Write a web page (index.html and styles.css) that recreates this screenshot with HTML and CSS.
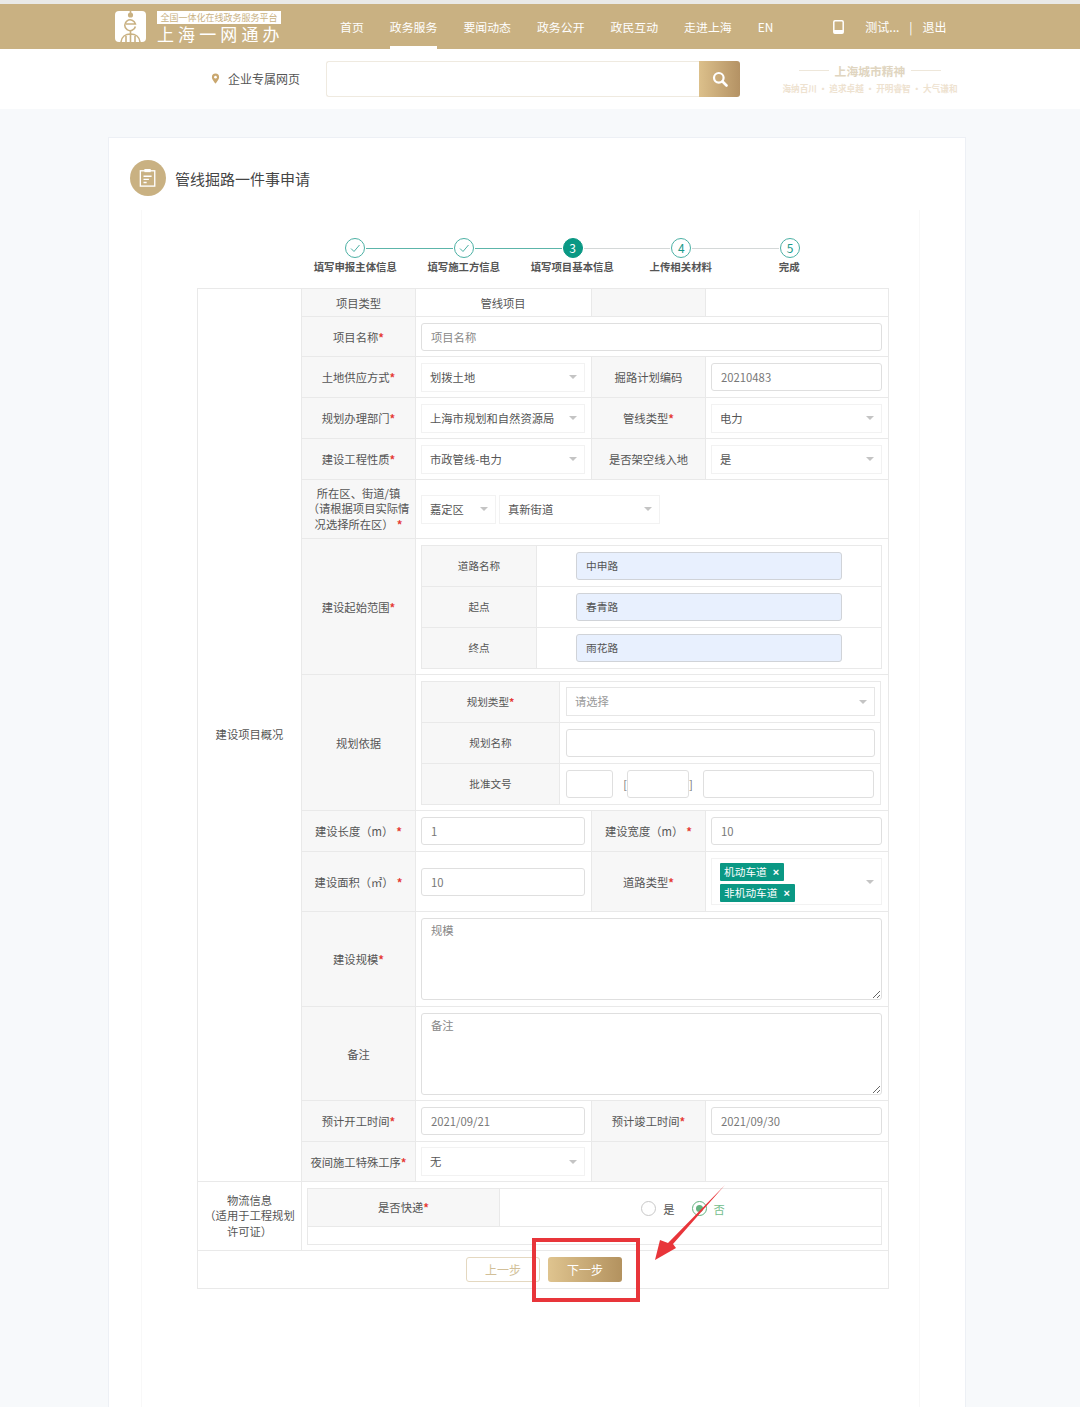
FILE: index.html
```html
<!DOCTYPE html>
<html lang="zh-CN">
<head>
<meta charset="utf-8">
<title>管线掘路一件事申请</title>
<link rel="stylesheet" href="styles.css">
</head>
<body>
<div class="page">
  <header class="topbar">
    <div class="brand">
      <svg class="logo-mark" viewBox="0 0 31 31"><rect width="31" height="31" rx="4" fill="#fff"/><g fill="none" stroke="#c9b182" stroke-width="1.6"><path d="M15.500 0v6"/><circle cx="15.500" cy="4" r="1.800" fill="#c9b182"/><path d="M20.400 15.500a5.400 5.400 0 1 1 0-2.500H11"/><path d="M15.500 19.500v4"/><path d="M15.500 23v8M6 31c.5-5 4.500-8 9.500-8s9 3 9.500 8M11 31v-6M20 31v-6"/></g></svg>
      <div class="brand-text">
        <span class="brand-sub">全国一体化在线政务服务平台</span>
        <span class="brand-main">上海一网通办</span>
      </div>
    </div>
    <nav class="nav">
      <a class="nav-item">首页</a>
      <a class="nav-item active">政务服务</a>
      <a class="nav-item">要闻动态</a>
      <a class="nav-item">政务公开</a>
      <a class="nav-item">政民互动</a>
      <a class="nav-item">走进上海</a>
      <a class="nav-item">EN</a>
    </nav>
    <div class="user">
      <svg class="phone" viewBox="0 0 11 14"><rect x=".8" y=".8" width="9.400" height="12.400" rx="1.200" fill="none" stroke="#fff" stroke-width="1.500"/><rect x=".8" y="10" width="9.400" height="3.200" fill="#fff"/></svg>
      <span class="user-name">测试...</span>
      <span class="user-sep">|</span>
      <span>退出</span>
    </div>
  </header>

  <div class="searchbar">
    <div class="location">
      <svg class="pin" viewBox="0 0 10 12"><path d="M5 .5a4 4 0 0 0-4 4c0 2.800 4 7 4 7s4-4.200 4-7a4 4 0 0 0-4-4z" fill="#c9a76f"/><circle cx="5" cy="4.500" r="1.500" fill="#fff"/></svg>
      <span>企业专属网页</span>
    </div>
    <div class="search">
      <div class="search-field"></div>
      <div class="search-btn">
        <svg viewBox="0 0 16 16" width="16" height="16"><circle cx="6.800" cy="6.800" r="4.800" fill="none" stroke="#fff" stroke-width="2.200"/><path d="M10.500 10.500l4 4" stroke="#fff" stroke-width="2.600" stroke-linecap="round"/></svg>
      </div>
    </div>
    <div class="slogan">
      <div class="slogan-title"><i></i><span>上海城市精神</span><i></i></div>
      <div class="slogan-sub">海纳百川 · 追求卓越 · 开明睿智 · 大气谦和</div>
    </div>
  </div>

  <main class="content">
    <section class="card">
      <div class="card-head">
        <span class="head-icon">
          <svg viewBox="0 0 20 22" width="18" height="20"><g fill="none" stroke="#fff" stroke-width="1.500"><rect x="1.500" y="3" width="16" height="17"/><path d="M5 9h9M5 12.500h6M5 16h3.500"/></g><rect x="6" y="1" width="7" height="3.500" fill="#fff"/></svg>
        </span>
        <h1 class="title">管线掘路一件事申请</h1>
      </div>
      <div class="card-inner">
        <div class="track">
          <span class="dot"><svg viewBox="0 0 12 12" width="12" height="12"><path d="M2 6.500l3 3 5.500-6.500" fill="none" stroke="#4bb0a4" stroke-width="1"/></svg></span>
          <span class="link done"></span>
          <span class="dot"><svg viewBox="0 0 12 12" width="12" height="12"><path d="M2 6.500l3 3 5.500-6.500" fill="none" stroke="#4bb0a4" stroke-width="1"/></svg></span>
          <span class="link done"></span>
          <span class="dot current">3</span>
          <span class="link"></span>
          <span class="dot">4</span>
          <span class="link"></span>
          <span class="dot">5</span>
        </div>
        <div class="step-labels">
          <span>填写申报主体信息</span>
          <span>填写施工方信息</span>
          <span>填写项目基本信息</span>
          <span>上传相关材料</span>
          <span>完成</span>
        </div>

        <table class="form">
          <colgroup><col class="c1"><col class="c2"><col class="c3"><col class="c4"><col class="c5"></colgroup>
          <tr class="h28">
            <td class="plain" rowspan="14">建设项目概况</td>
            <th>项目类型</th>
            <td class="center">管线项目</td>
            <th></th>
            <td></td>
          </tr>
          <tr class="h40">
            <th>项目名称<b>*</b></th>
            <td colspan="3"><input class="ipt" placeholder="项目名称"></td>
          </tr>
          <tr class="h41">
            <th>土地供应方式<b>*</b></th>
            <td><div class="sel">划拨土地</div></td>
            <th>掘路计划编码</th>
            <td><input class="ipt" value="20210483"></td>
          </tr>
          <tr class="h41">
            <th>规划办理部门<b>*</b></th>
            <td><div class="sel">上海市规划和自然资源局</div></td>
            <th>管线类型<b>*</b></th>
            <td><div class="sel">电力</div></td>
          </tr>
          <tr class="h41">
            <th>建设工程性质<b>*</b></th>
            <td><div class="sel">市政管线-电力</div></td>
            <th>是否架空线入地</th>
            <td><div class="sel">是</div></td>
          </tr>
          <tr class="h59">
            <th class="multi">所在区、街道/镇（请根据项目实际情况选择所在区）<b class="gap">*</b></th>
            <td colspan="3">
              <div class="sel-pair">
                <div class="sel district">嘉定区</div>
                <div class="sel street">真新街道</div>
              </div>
            </td>
          </tr>
          <tr class="h136">
            <th>建设起始范围<b>*</b></th>
            <td colspan="3">
              <table class="sub road">
                <tr><th>道路名称</th><td><input class="ipt filled" value="中申路"></td></tr>
                <tr><th>起点</th><td><input class="ipt filled" value="春青路"></td></tr>
                <tr><th>终点</th><td><input class="ipt filled" value="雨花路"></td></tr>
              </table>
            </td>
          </tr>
          <tr class="h136">
            <th>规划依据</th>
            <td colspan="3">
              <table class="sub plan">
                <tr><th>规划类型<b>*</b></th><td><div class="sel bordered muted">请选择</div></td></tr>
                <tr><th>规划名称</th><td><input class="ipt"></td></tr>
                <tr><th>批准文号</th><td>
                  <div class="doc-no">
                    <input class="ipt n1"><span class="br">[</span><input class="ipt n2"><span class="br">]</span><input class="ipt n3">
                  </div>
                </td></tr>
              </table>
            </td>
          </tr>
          <tr class="h41">
            <th>建设长度（m）<b class="gap">*</b></th>
            <td><input class="ipt" value="1"></td>
            <th>建设宽度（m）<b class="gap">*</b></th>
            <td><input class="ipt" value="10"></td>
          </tr>
          <tr class="h60">
            <th>建设面积（㎡）<b class="gap">*</b></th>
            <td><input class="ipt" value="10"></td>
            <th>道路类型<b>*</b></th>
            <td>
              <div class="sel tags">
                <span class="tag">机动车道<i>×</i></span>
                <span class="tag">非机动车道<i>×</i></span>
              </div>
            </td>
          </tr>
          <tr class="h95">
            <th>建设规模<b>*</b></th>
            <td colspan="3"><textarea class="area" placeholder="规模"></textarea></td>
          </tr>
          <tr class="h94">
            <th>备注</th>
            <td colspan="3"><textarea class="area" placeholder="备注"></textarea></td>
          </tr>
          <tr class="h41">
            <th>预计开工时间<b>*</b></th>
            <td><input class="ipt" value="2021/09/21"></td>
            <th>预计竣工时间<b>*</b></th>
            <td><input class="ipt" value="2021/09/30"></td>
          </tr>
          <tr class="h40">
            <th class="tight">夜间施工特殊工序<b>*</b></th>
            <td><div class="sel">无</div></td>
            <th></th>
            <td></td>
          </tr>
          <tr class="h69">
            <td class="plain wide">物流信息<br>（适用于工程规划<br>许可证）</td>
            <td colspan="4">
              <table class="sub logistics">
                <tr class="h38">
                  <th>是否快递<b>*</b></th>
                  <td>
                    <div class="radios">
                      <span class="radio"></span><span class="radio-text">是</span>
                      <span class="radio on"></span><span class="radio-text on">否</span>
                    </div>
                  </td>
                </tr>
                <tr class="h18"><td colspan="2"></td></tr>
              </table>
            </td>
          </tr>
          <tr class="h38">
            <td colspan="5">
              <div class="actions">
                <button class="btn ghost">上一步</button>
                <button class="btn solid">下一步</button>
              </div>
            </td>
          </tr>
        </table>
      </div>
    </section>
  </main>

  <div class="mark-box"></div>
  <svg class="mark-arrow" viewBox="0 0 80 80" width="80" height="80"><polygon points="74,0 22,59 25,63 4,75 9,55 17,58" fill="#e8353a"/></svg>
</div>
</body>
</html>
```

FILE: styles.css
```css
* { box-sizing: border-box; }
html, body { margin: 0; padding: 0; }
body {
  font-family: "Noto Sans CJK SC", "Liberation Sans", sans-serif;
  font-size: 11.3px;
  color: #555;
  background: #f7f9fb;
}
.page { position: relative; width: 1080px; height: 1407px; overflow: hidden; }

/* top bar */
.topbar {
  height: 49px;
  border-top: 4px solid #e9e9e7;
  background: #c9b182;
  display: flex;
  align-items: center;
  padding-left: 115px;
  color: #fff;
}
.brand { display: flex; align-items: center; gap: 11px; width: 225px; }
.logo-mark { width: 31px; height: 31px; }
.brand-text { display: flex; flex-direction: column; width: 124px; }
.brand-sub {
  background: #fff;
  color: #c9b182;
  font-size: 9px;
  line-height: 13px;
  height: 13px;
  text-align: center;
  white-space: nowrap;
  overflow: hidden;
}
.brand-main { font-size: 17px; line-height: 19px; letter-spacing: 4.1px; white-space: nowrap; }
.nav { display: flex; gap: 26px; height: 45px; font-size: 11.900px; }
.nav-item { line-height: 46px; height: 45px; }
.nav-item.active { border-bottom: 3px solid #fff; }
.user { display: flex; align-items: center; margin-left: 60px; font-size: 12px; }
.phone { width: 11px; height: 14px; margin-right: 21px; }
.user-sep { margin: 0 10px; }

/* search */
.searchbar {
  height: 60px;
  background: #fff;
  display: flex;
  align-items: center;
  padding-left: 211px;
}
.location { display: flex; align-items: center; gap: 8px; width: 115px; font-size: 12px; line-height: 16px; color: #555; margin-top: -1px; }
.pin { width: 9px; height: 11px; }
.search { display: flex; width: 414px; height: 36px; }
.search-field { flex: 1; border: 1px solid #efeae0; border-right: 0; border-radius: 3px 0 0 3px; }
.search-btn {
  width: 41px;
  background: linear-gradient(90deg, #dcc08b, #b49264);
  border-radius: 0 3px 3px 0;
  display: flex;
  align-items: center;
  justify-content: center;
}
.slogan { width: 176px; margin-left: 42px; text-align: center; }
.slogan-title {
  display: flex;
  align-items: center;
  justify-content: center;
  gap: 6px;
  font-size: 11.800px;
  font-weight: 700;
  line-height: 14px;
  color: #e0d5c0;
}
.slogan-title i { width: 30px; height: 1px; background: #eee7da; }
.slogan-sub { font-size: 8.600px; font-weight: 700; line-height: 13px; margin-top: 4px; color: #eee2d0; white-space: nowrap; }

/* card */
.content { padding: 28px 114px 0 108px; }
.card {
  height: 1300px;
  background: #fff;
  border: 1px solid #edf0f5;
}
.card-head { display: flex; align-items: center; gap: 9px; padding: 22px 0 0 21px; height: 58px; }
.head-icon {
  width: 36px;
  height: 36px;
  border-radius: 50%;
  background: #c9b182;
  display: flex;
  align-items: center;
  justify-content: center;
  flex: none;
}
.title { margin: 0; font-size: 15px; font-weight: 400; color: #444; }
.card-inner {
  margin: 14px 45px 0 32px;
  padding: 28px 0 0 55px;
  height: 1220px;
  border-left: 1px solid #f8f8f8;
  border-right: 1px solid #f8f8f8;
}

/* steps */
.track { display: flex; align-items: center; width: 455px; margin-left: 148px; height: 20px; }
.dot {
  width: 20px;
  height: 20px;
  flex: none;
  border-radius: 50%;
  border: 1px solid #4bb0a4;
  color: #1a9a8a;
  font-size: 12px;
  line-height: 18px;
  text-align: center;
  background: #fff;
  display: flex;
  align-items: center;
  justify-content: center;
}
.dot.current { background: #0a9884; border-color: #0a9884; color: #fff; }
.link { flex: 1; height: 1px; background: #d4d8d8; margin: 0 1px; }
.link.done { background: #5cb5aa; }
.step-labels {
  display: grid;
  grid-template-columns: repeat(5, 108.500px);
  margin: 1px 0 14px 104px;
  font-size: 10.400px;
  font-weight: 700;
  line-height: 15px;
  text-align: center;
  color: #555;
  white-space: nowrap;
}

/* form table */
.form, .sub { border-collapse: collapse; table-layout: fixed; }
.form { width: 691px; margin-left: 0; }
.c1 { width: 104px; }
.c2 { width: 114px; }
.c3 { width: 176px; }
.c4 { width: 114px; }
.c5 { width: 183px; }
.form td, .form th {
  border: 1px solid #e9e9e9;
  padding: 0 6px 0 5px;
  font-weight: 400;
  text-align: left;
  vertical-align: middle;
}
.form th { background: #f7f7f7; text-align: center; padding: 0 4px; }
.form td.center { text-align: center; }
.form td.plain { text-align: center; padding: 0 8px; line-height: 15.500px; }
.form td.plain.wide { padding: 0; }
.form th.multi { line-height: 15.500px; padding: 0 5px; }
.form th.tight { padding: 0; white-space: nowrap; }
.form b { color: #e53935; font-weight: 700; }
.form b.gap { margin-left: 3px; }
.h18 { height: 18px; }
.h28 { height: 28px; }
.h38 { height: 38px; }
.h40 { height: 40px; }
.h41 { height: 41px; }
.h59 { height: 59px; }
.h60 { height: 60px; }
.h69 { height: 69px; }
.h94 { height: 94px; }
.h95 { height: 95px; }
.h136 { height: 136px; }

.ipt {
  display: block;
  width: 100%;
  height: 28px;
  border: 1px solid #dfdfdf;
  border-radius: 3px;
  padding: 0 9px;
  font: inherit;
  color: #777;
  background: #fff;
  outline: 0;
}
.ipt::placeholder, .area::placeholder { color: #888; opacity: 1; }
.ipt.filled { width: 266px; margin-left: 33px; background: #e8f0fe; border-color: #d0d3d8; color: #555; font-size: 10.700px; }
.area {
  display: block;
  width: 100%;
  height: 82px;
  border: 1px solid #dfdfdf;
  border-radius: 3px;
  padding: 3px 9px;
  font: inherit;
  background: #fff;
  outline: 0;
}
.sel {
  position: relative;
  height: 29px;
  line-height: 27px;
  padding: 0 24px 0 8px;
  border: 1px solid #f2f2f2;
  background: #fff;
  white-space: nowrap;
  color: #555;
}
.sel::after {
  content: "";
  position: absolute;
  right: 7px;
  top: 50%;
  margin-top: -2px;
  border: 4px solid transparent;
  border-top: 4px solid #c4c4c4;
  border-bottom: 0;
}
.sel.bordered { border-color: #e6e6e6; }
.sel.muted { color: #999; }
.sel-pair { display: flex; gap: 3px; }
.district { width: 75px; }
.street { width: 161px; }
.sel.tags {
  height: 47px;
  padding: 4px 0 0 8px;
  display: flex;
  flex-direction: column;
  align-items: flex-start;
  gap: 3px;
  line-height: 18px;
}
.tag { height: 18px; padding: 0 5px 0 4px; background: #0a9884; color: #fff; border-radius: 1px; font-size: 10.700px; }
.tag i { font-family: "Liberation Sans", sans-serif; font-style: normal; font-size: 11px; margin-left: 6px; font-weight: 700; }

/* nested tables */
.sub { width: 100%; }
.form .sub th { font-size: 10.600px; }
.form .logistics th { font-size: 11.300px; }
.road { width: 461px; }
.road tr, .plan tr { height: 41px; }
.road th { width: 115px; }
.form .road td { padding: 0 6px; }
.plan { width: 460px; }
.plan th { width: 138px; }
.form .plan td { padding: 0 6px; }
.plan .sel, .plan .ipt { width: 309px; }
.plan .doc-no .ipt { padding: 0; }
.doc-no { display: flex; align-items: center; }
.plan .n1 { width: 47px; flex: none; }
.plan .n2 { width: 62px; flex: none; }
.plan .n3 { width: 171px; flex: none; }
.br { color: #777; width: 14px; flex: none; text-align: right; }
.br + .ipt + .br { width: 3px; text-align: left; margin-right: 11px; }
.logistics { width: 575px; }
.logistics th { width: 192px; }
.radios { display: flex; align-items: center; justify-content: center; padding: 3px 14px 0 0; }
.radio {
  width: 15px;
  height: 15px;
  border-radius: 50%;
  border: 1px solid #c8c8c8;
  background: #fff;
  margin-right: 7px;
  display: flex;
  align-items: center;
  justify-content: center;
}
.radio.on { border-color: #63b27f; }
.radio.on::after { content: ""; width: 7px; height: 7px; border-radius: 50%; background: #63b27f; }
.radio-text { margin-right: 17px; }
.radio-text.on { color: #74bd8c; margin-right: 0; }

/* actions */
.actions { display: flex; justify-content: center; gap: 8px; padding-left: 3px; }
.btn {
  width: 74px;
  height: 25px;
  border-radius: 3px;
  font: inherit;
  font-size: 12px;
  padding: 0;
  border: 1px solid #e4d8c0;
  background: #fff;
  color: #d2bf98;
}
.btn.solid { border: 0; background: linear-gradient(90deg, #dfc48f, #b3925f); color: #fff; }

/* annotation overlays */
.mark-box { position: absolute; left: 532px; top: 1238px; width: 108px; height: 64px; border: 4px solid #e8353a; }
.mark-arrow { position: absolute; left: 651px; top: 1185px; }
```
